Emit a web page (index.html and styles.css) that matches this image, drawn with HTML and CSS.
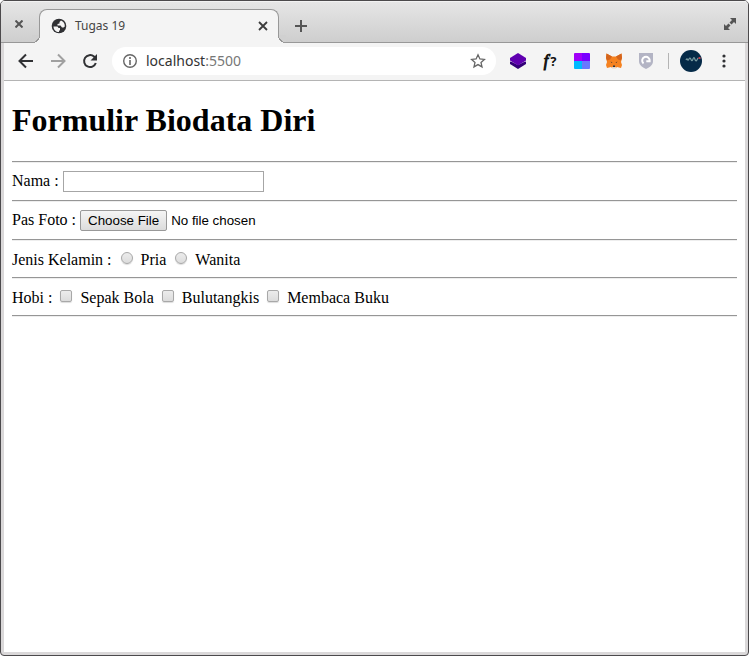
FILE: index.html
```html
<!DOCTYPE html>
<html lang="id">
<head>
<meta charset="utf-8">
<title>Tugas 19</title>
<link rel="stylesheet" href="styles.css">
</head>
<body>
<div class="window">
  <header class="tabstrip">
    <button class="window-close" aria-label="Close window"><svg width="8" height="8" viewBox="0 0 8 8"><path d="M.5.5l7 7M7.500.5l-7 7" stroke="#555" stroke-width="2"/></svg></button>
    <div class="tab">
      <svg class="globe" width="16" height="16" viewBox="0 0 16 16"><circle cx="8" cy="8" r="7.300" fill="#303134"/><path d="M2.500 8.500h4l1 1.500H9v2l-1 1v1C5 14 2.500 12 2.500 8.500zM10 2.500L8.500 4v1.500L6.500 6v1.500h3L11 9.500h1.500l1.300-1C14 5.500 12.500 3.500 10 2.500z" fill="#f4f4f4"/></svg>
      <span class="tab-title">Tugas 19</span>
      <button aria-label="Close tab"><svg width="10" height="10" viewBox="0 0 10 10"><path d="M1 1l8 8M9 1L1 9" stroke="#3c3c3c" stroke-width="1.800"/></svg></button>
    </div>
    <button class="new-tab" aria-label="New tab"><svg width="12" height="12" viewBox="0 0 12 12"><path d="M6 0v12M0 6h12" stroke="#555" stroke-width="2"/></svg></button>
    <button class="maximize" aria-label="Maximize"><svg width="12" height="12" viewBox="0 0 12 12"><path d="M6 0h6v6l-2-2-2.500 2.500-2-2L8 2zM0 6l2 2 2.500-2.500 2 2L4 10l2 2H0z" fill="#555"/></svg></button>
  </header>
  <nav class="toolbar">
    <button aria-label="Back"><svg width="16" height="16" viewBox="0 0 16 16"><path d="M15 8H2M8 1.500L1.500 8 8 14.500" fill="none" stroke="#303134" stroke-width="2"/></svg></button>
    <button aria-label="Forward"><svg width="16" height="16" viewBox="0 0 16 16"><path d="M1 8h13M8 1.500L14.500 8 8 14.500" fill="none" stroke="#a0a0a0" stroke-width="2"/></svg></button>
    <button aria-label="Reload"><svg width="16" height="16" viewBox="0 0 16 16"><path d="M13.800 10A6 6 0 1 1 12 3.500L13 4.500" fill="none" stroke="#303134" stroke-width="2"/><path d="M15 1v6.500H8.500z" fill="#303134"/></svg></button>
    <div class="address">
      <svg width="16" height="16" viewBox="0 0 16 16"><circle cx="8" cy="8" r="6.300" fill="none" stroke="#666" stroke-width="1.400"/><path d="M8 7v5M8 4v2" stroke="#666" stroke-width="1.600"/></svg>
      <span class="url">localhost<span class="port">:5500</span></span>
      <button aria-label="Bookmark"><svg width="16" height="16" viewBox="0 0 16 16"><path d="M8 1.800l1.900 4.100 4.500.5-3.400 3 1 4.500L8 11.600l-4 2.300 1-4.500-3.400-3 4.500-.5z" fill="none" stroke="#666" stroke-width="1.300"/></svg></button>
    </div>
    <div class="extensions">
      <svg width="16" height="16" viewBox="0 0 16 16"><path d="M0 8.500l2 .5 6 3 6-3 2-.5V11l-8 5-8-5z" fill="#330078"/><path d="M8 0l8 5v2.500L8 12.500 0 7.500V5z" fill="#6000b0"/></svg>
      <span class="font-tool"><i>f</i><b>?</b></span>
      <svg width="16" height="16" viewBox="0 0 16 16"><clipPath id="tile"><rect width="16" height="16" rx="1"/></clipPath><g clip-path="url(#tile)"><path d="M0 0h8v8H0z" fill="#a000f8"/><path d="M8 0h8v8H8z" fill="#7800ff"/><path d="M0 8h8v8H0z" fill="#00b8ff"/><path d="M8 8h8v8H8z" fill="#6878ff"/></g></svg>
      <svg width="16" height="16" viewBox="0 0 16 16"><path d="M.5.5l5.500 3h4l5.500-3L16 5l-1 4 1 3-1 3-4-1-1 1H6l-1-1-4 1-1-3 1-3-1-4z" fill="#f58220"/><path d="M.5.5l5.500 3-2 3-3 1L0 5zM15.500.5l-5.500 3 2 3 3 1 1-2.500z" fill="#d4641c"/><path d="M4.500 8.500l2 1-1 .5zM11.500 8.500l-2 1 1 .5z" fill="#4b3b32"/><path d="M7 12.500h2V14H7z" fill="#263443"/><path d="M5.500 14H10.500L10 15.500H6z" fill="#e6d4c4"/></svg>
      <svg width="16" height="16" viewBox="0 0 16 16"><path d="M1 0h14v8c0 4-3 6-7 8-4-2-7-4-7-8z" fill="#b3b4c4"/><path d="M5.500 10.500A3.800 3.800 0 1 1 11.700 8.200H8.300" fill="none" stroke="#fff" stroke-width="2"/></svg>
    </div>
    <span class="divider"></span>
    <button class="avatar" aria-label="Profile"><svg width="22" height="22" viewBox="0 0 22 22"><circle cx="11" cy="11" r="11" fill="#052a48"/><path d="M6 10q1-2 1.500-.5T9 9t2 .5T13 9t2 .5T18 8" fill="none" stroke="#7799a0" stroke-width="1.200"/><path d="M18.500 7h2v2h-2z" fill="#c13f4c"/></svg></button>
    <button class="menu" aria-label="Menu"><svg width="4" height="14" viewBox="0 0 4 14"><g fill="#303134"><circle cx="2" cy="2" r="1.600"/><circle cx="2" cy="7" r="1.600"/><circle cx="2" cy="12" r="1.600"/></g></svg></button>
  </nav>
  <main class="page">
    <h1>Formulir Biodata Diri</h1>
    <form>
      <hr>
      <div class="row"><label for="nama">Nama :</label><input class="text" type="text" id="nama"></div>
      <hr>
      <div class="row"><label for="foto">Pas Foto :</label><input class="file" type="file" id="foto"></div>
      <hr>
      <div class="row choices radios" role="radiogroup" aria-label="Jenis Kelamin"><span>Jenis Kelamin :</span><label><input type="radio" name="jk">Pria</label><label><input type="radio" name="jk">Wanita</label></div>
      <hr>
      <div class="row choices" role="group" aria-label="Hobi"><span>Hobi :</span><label><input type="checkbox">Sepak Bola</label><label><input type="checkbox">Bulutangkis</label><label><input type="checkbox">Membaca Buku</label></div>
      <hr>
    </form>
  </main>
</div>
</body>
</html>
```
FILE: styles.css
```css
* { box-sizing: border-box; }
body { margin: 0; background: #fff; }
svg { display: block; flex: none; }

.window {
  display: flex;
  flex-direction: column;
  min-height: 100vh;
  padding: 0 3px 3px;
  border: 1px solid #4c4a4c;
  border-radius: 5px 5px 4px 4px;
  background: #dad8d9;
  overflow: hidden;
}

.tabstrip button, .toolbar button {
  padding: 0;
  border: 0;
  background: none;
}

.tabstrip {
  display: flex;
  align-items: center;
  height: 42px;
  margin: 0 -3px;
  padding: 0 12px 0 14px;
  border-bottom: 1px solid #989898;
  background: linear-gradient(#e6e6e6, #cecece);
  box-shadow: inset 0 1px #f2f2f2;
  font-family: "Noto Sans", "Open Sans", sans-serif;
}
.window-close { margin-top: 4px; }
.tab {
  position: relative;
  display: flex;
  align-items: center;
  align-self: flex-end;
  gap: 8px;
  width: 240px;
  height: 34px;
  margin: 0 16px -1px 16px;
  padding: 0 10px 2px 11px;
  border: 1px solid #989898;
  border-bottom: 0;
  border-radius: 8px 8px 0 0;
  background: #f4f4f4;
}
.tab::before, .tab::after {
  content: "";
  position: absolute;
  bottom: 0;
  width: 8px;
  height: 8px;
}
.tab::before {
  left: -8px;
  background: radial-gradient(circle at 0 0, #d0d0d0 7px, #989898 7px 8px, #f4f4f4 8px);
}
.tab::after {
  right: -8px;
  background: radial-gradient(circle at 100% 0, #d0d0d0 7px, #989898 7px 8px, #f4f4f4 8px);
}
.tab-title { flex: 1; color: #444; font-size: 12px; line-height: 16px; }
.new-tab { margin-top: 8px; }
.maximize { margin: 4px 0 0 auto; }

.toolbar {
  display: flex;
  align-items: center;
  gap: 16px;
  height: 38px;
  padding: 0 19px 1px 14px;
  border-bottom: 1px solid #b4b4b4;
  background: #f4f4f4;
}
.address {
  display: flex;
  flex: 1;
  align-items: center;
  gap: 8px;
  height: 28px;
  margin-left: -2px;
  padding: 0 10px;
  border-radius: 14px;
  background: #fff;
}
.url {
  flex: 1;
  color: #333;
  font: 14px/20px "Noto Sans", "Open Sans", sans-serif;
}
.port { color: #777; }
.extensions { display: flex; align-items: center; gap: 16px; margin-left: -2px; }
.font-tool {
  display: flex;
  justify-content: center;
  gap: 2px;
  width: 16px;
  color: #111;
  font: 16px/16px "Liberation Serif", serif;
}
.font-tool i { -webkit-text-stroke: 1px #111; }
.font-tool b { font: bold 13px/16px "Noto Sans", sans-serif; }
.divider { width: 1px; height: 16px; margin-left: -2px; background: #b4b4b4; }
.toolbar .avatar { margin-left: -5px; }
.toolbar .menu { margin-left: 4px; }

.page {
  flex: 1;
  padding: 21px 8px 8px;
  background: #fff;
  color: #000;
  font: 16px/20px "Liberation Serif", "Times New Roman", serif;
}
h1 { margin: 0 0 22px; font-size: 32px; line-height: 37px; }
hr {
  height: 2px;
  margin: 8px 0;
  border: 0;
  border-top: 1px solid #969696;
  border-bottom: 1px solid #eee;
}
.row { display: flex; align-items: flex-start; gap: 4px; height: 21px; }
.text {
  width: 201px;
  height: 21px;
  padding: 1px 3px;
  border: 1px solid #a6a6a6;
  border-radius: 0;
  font: 13px "Liberation Sans", sans-serif;
}
.file { height: 21px; color: #000; font: 13.333px/19px "Liberation Sans", sans-serif; }
.file::file-selector-button {
  height: 21px;
  margin: 0 4px 0 0;
  padding: 0 7px;
  border: 1px solid #999;
  border-radius: 2px;
  background: linear-gradient(#f5f5f5, #dcdcdc);
  color: #000;
  font: inherit;
}
.choices { gap: 8px; height: 20px; padding-top: 1px; }
.choices label { display: flex; gap: 8px; }
.radios { gap: 9px; }
.choices input {
  appearance: none;
  width: 12px;
  height: 12px;
  margin: 2px 0 0;
  border: 1px solid #a8a8a8;
  border-radius: 2px;
  background: linear-gradient(#ececec, #dcdcdc);
  box-shadow: 0 1px 1px #ddd;
}
.choices input[type="radio"] { border-radius: 50%; }
```
